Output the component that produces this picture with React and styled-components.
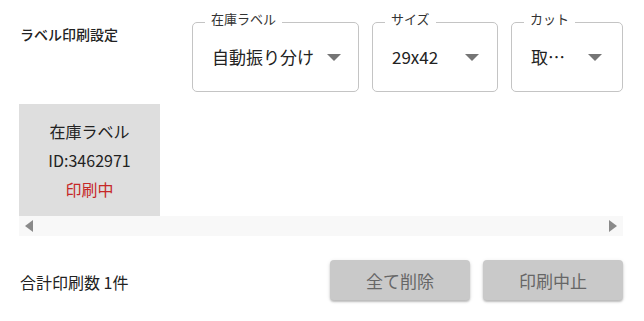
import React from 'react';
import styled, { createGlobalStyle } from 'styled-components';

const GlobalStyle = createGlobalStyle`
  html, body {
    margin: 0;
    padding: 0;
    background: #fff;
  }
  body {
    font-family: "Noto Sans CJK JP", Roboto, sans-serif;
    color: #222;
  }
`;

const Page = styled.div`
  width: 644px;
  height: 321px;
  box-sizing: border-box;
  padding: 22px 21px 0 19px;
  display: flex;
  flex-direction: column;
`;

const Header = styled.div`
  display: flex;
  align-items: flex-start;
  height: 70px;
`;

const Title = styled.div`
  width: 173px;
  padding: 2px 0 0 1px;
  font-size: 14px;
  line-height: 20px;
  font-weight: 500;
  color: #222;
`;

const Selects = styled.div`
  display: flex;
  gap: 13px;
`;

const SelectBox = styled.div`
  position: relative;
  box-sizing: border-box;
  width: ${(p) => p.width}px;
  height: 70px;
  border: 1px solid #c4c4c4;
  border-radius: 5px;
  display: flex;
  align-items: center;
  padding: 0 ${(p) => p.arrowGap}px 0 19px;
`;

const SelectLabel = styled.span`
  position: absolute;
  top: -13px;
  left: 12px;
  padding: 0 6px;
  background: #fff;
  font-size: 13px;
  line-height: 18px;
  color: #333;
`;

const SelectValue = styled.span`
  flex: 1;
  font-size: 17px;
  line-height: 24px;
  color: #222;
  white-space: nowrap;
`;

const Arrow = styled.span`
  width: 0;
  height: 0;
  border-left: 7px solid transparent;
  border-right: 7px solid transparent;
  border-top: 7px solid #757575;
`;

const Scroller = styled.div`
  margin-top: 12px;
  display: flex;
  flex-direction: column;
`;

const Cards = styled.div`
  display: flex;
  height: 112px;
`;

const Card = styled.div`
  width: 141px;
  box-sizing: border-box;
  padding: 13px 0 12px;
  background: #dedede;
  display: flex;
  flex-direction: column;
  align-items: center;
  font-size: 16px;
  line-height: 29px;
  color: #222;
`;

const Status = styled.span`
  color: #c62828;
`;

const ScrollBar = styled.div`
  height: 20px;
  background: #f8f8f8;
  display: flex;
  align-items: center;
  justify-content: space-between;
  padding: 0 6px 0 6px;
`;

const ScrollArrow = styled.span`
  width: 0;
  height: 0;
  border-top: 6px solid transparent;
  border-bottom: 6px solid transparent;
  ${(p) =>
    p.dir === 'left'
      ? 'border-right: 8px solid #8a8a8a;'
      : 'border-left: 8px solid #8a8a8a;'}
`;

const Footer = styled.div`
  margin-top: 24px;
  display: flex;
  align-items: center;
  justify-content: space-between;
  padding-left: 1px;
`;

const Total = styled.div`
  font-size: 16px;
  line-height: 24px;
  padding-top: 3px;
  color: #222;
`;

const Buttons = styled.div`
  display: flex;
  gap: 13px;
`;

const Button = styled.button`
  width: 140px;
  height: 40px;
  border: none;
  border-radius: 4px;
  background: #c9c9c9;
  color: #666;
  font-family: "Noto Sans CJK JP", Roboto, sans-serif;
  font-size: 17px;
  box-shadow: 0 2px 2px rgba(0, 0, 0, 0.22), 0 1px 4px rgba(0, 0, 0, 0.1);
`;

const selects = [
  { id: 1, label: '在庫ラベル', value: '自動振り分け', width: 167, arrowGap: 17 },
  { id: 2, label: 'サイズ', value: '29x42', width: 126, arrowGap: 18 },
  { id: 3, label: 'カット', value: '取…', width: 112, arrowGap: 20 },
];

const App = () => {
  return (
    <>
      <GlobalStyle />
      <Page>
        <Header>
          <Title>ラベル印刷設定</Title>
          <Selects>
            {selects.map((s) => (
              <SelectBox key={s.id} width={s.width} arrowGap={s.arrowGap}>
                <SelectLabel>{s.label}</SelectLabel>
                <SelectValue>{s.value}</SelectValue>
                <Arrow />
              </SelectBox>
            ))}
          </Selects>
        </Header>
        <Scroller>
          <Cards>
            <Card>
              <span>在庫ラベル</span>
              <span>ID:3462971</span>
              <Status>印刷中</Status>
            </Card>
          </Cards>
          <ScrollBar>
            <ScrollArrow dir="left" />
            <ScrollArrow dir="right" />
          </ScrollBar>
        </Scroller>
        <Footer>
          <Total>合計印刷数 1件</Total>
          <Buttons>
            <Button>全て削除</Button>
            <Button>印刷中止</Button>
          </Buttons>
        </Footer>
      </Page>
    </>
  );
};

export default App;
